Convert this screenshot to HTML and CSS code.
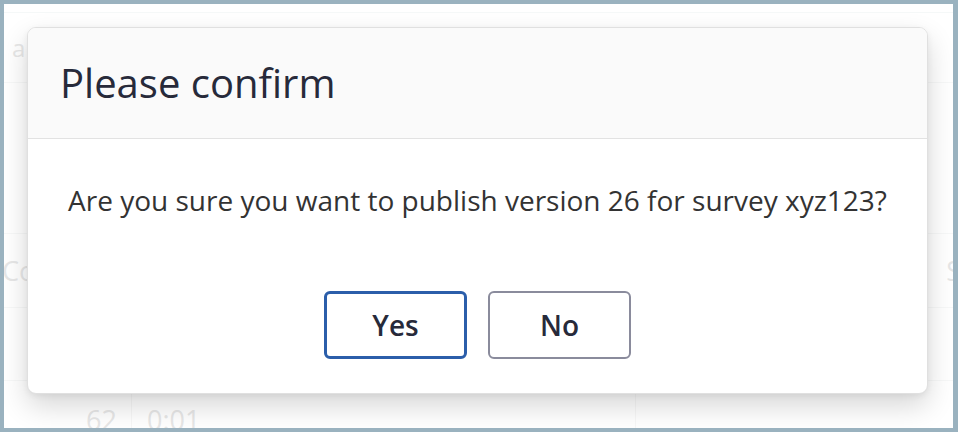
FILE: index.html
```html
<!DOCTYPE html>
<html lang="en">
<head>
<meta charset="utf-8">
<title>Please confirm</title>
<link rel="stylesheet" href="styles.css">
</head>
<body>
<div class="frame">
  <div class="table">
    <div class="row row-top"></div>
    <div class="row row-a"><span class="cell-a">a</span></div>
    <div class="row row-mid"></div>
    <div class="row row-co"><span class="cell-co">Co</span><span class="cell-s">S</span></div>
    <div class="row row-empty"></div>
    <div class="row row-num">
      <span class="cell-num">62</span>
      <span class="cell-time">0:01</span>
      <span class="cell-rest"></span>
    </div>
  </div>
  <div class="overlay">
    <div class="modal" role="dialog" aria-labelledby="dlg-title">
      <div class="modal-header">
        <h2 class="modal-title" id="dlg-title">Please confirm</h2>
      </div>
      <div class="modal-body">
        <p class="modal-text">Are you sure you want to publish version 26 for survey xyz123?</p>
        <div class="modal-actions">
          <button class="btn btn-primary">Yes</button>
          <button class="btn btn-secondary">No</button>
        </div>
      </div>
    </div>
  </div>
</div>
</body>
</html>
```

FILE: styles.css
```css
html, body {
  margin: 0;
  padding: 0;
  background: #ffffff;
}

.frame {
  width: 958px;
  height: 432px;
  box-sizing: border-box;
  border: 4px solid #9ab2bf;
  border-right-width: 5px;
  position: relative;
  overflow: hidden;
  background: #ffffff;
  font-family: "Open Sans", "Noto Sans", sans-serif;
}

.table {
  display: flex;
  flex-direction: column;
  color: #c9c9c9;
}

.row {
  display: flex;
  align-items: center;
  border-bottom: 1px solid #eef0f0;
  box-sizing: border-box;
}

.row-top {
  height: 9px;
  border-bottom-color: #e9f0f0;
}

.row-a {
  height: 70px;
  padding-left: 8px;
  font-size: 24px;
}

.row-mid {
  height: 151px;
}

.row-co {
  height: 74px;
  justify-content: space-between;
  font-size: 27px;
  margin-left: -2px;
  margin-right: -8px;
}

.row-empty {
  height: 73px;
}

.row-num {
  height: 48px;
  align-items: flex-start;
  border-bottom: none;
  font-size: 27px;
}

.cell-num {
  width: 128px;
  box-sizing: border-box;
  text-align: right;
  padding-right: 14px;
  padding-top: 20px;
  border-right: 1px solid #eeeeee;
  height: 100%;
  line-height: 38px;
}

.cell-time {
  width: 504px;
  box-sizing: border-box;
  padding-left: 15px;
  padding-top: 20px;
  border-right: 1px solid #eeeeee;
  height: 100%;
  line-height: 38px;
}

.overlay {
  position: absolute;
  inset: 0;
  background: rgba(255, 255, 255, 0.55);
  display: flex;
  justify-content: flex-start;
  align-items: flex-start;
  padding-top: 23px;
  padding-left: 23px;
}

.modal {
  width: 901px;
  box-sizing: border-box;
  background: #ffffff;
  border: 1px solid #e0e0e0;
  border-radius: 9px;
  box-shadow: 0 12px 28px rgba(0, 0, 0, 0.16), 0 2px 6px rgba(0, 0, 0, 0.06);
  overflow: hidden;
}

.modal-header {
  height: 110px;
  background: #fafafa;
  border-bottom: 1px solid #e2e2e2;
  display: flex;
  align-items: center;
  padding-left: 32px;
}

.modal-title {
  margin: 0;
  font-size: 40px;
  font-weight: 400;
  color: #272a3a;
  line-height: 1;
}

.modal-body {
  display: flex;
  flex-direction: column;
  align-items: center;
  padding: 42px 0 34px;
}

.modal-text {
  margin: 0;
  font-size: 28px;
  line-height: 38px;
  color: #333333;
}

.modal-actions {
  display: flex;
  gap: 21px;
  margin-top: 72px;
}

.btn {
  width: 143px;
  height: 68px;
  box-sizing: border-box;
  border-radius: 6px;
  background: #ffffff;
  font-family: "Open Sans", "Noto Sans", sans-serif;
  font-size: 28px;
  font-weight: 600;
  color: #272a3a;
  cursor: pointer;
  padding: 0;
}

.btn-primary {
  border: 3px solid #2b5eaa;
}

.btn-secondary {
  border: 2px solid #8a8b9c;
}
```
